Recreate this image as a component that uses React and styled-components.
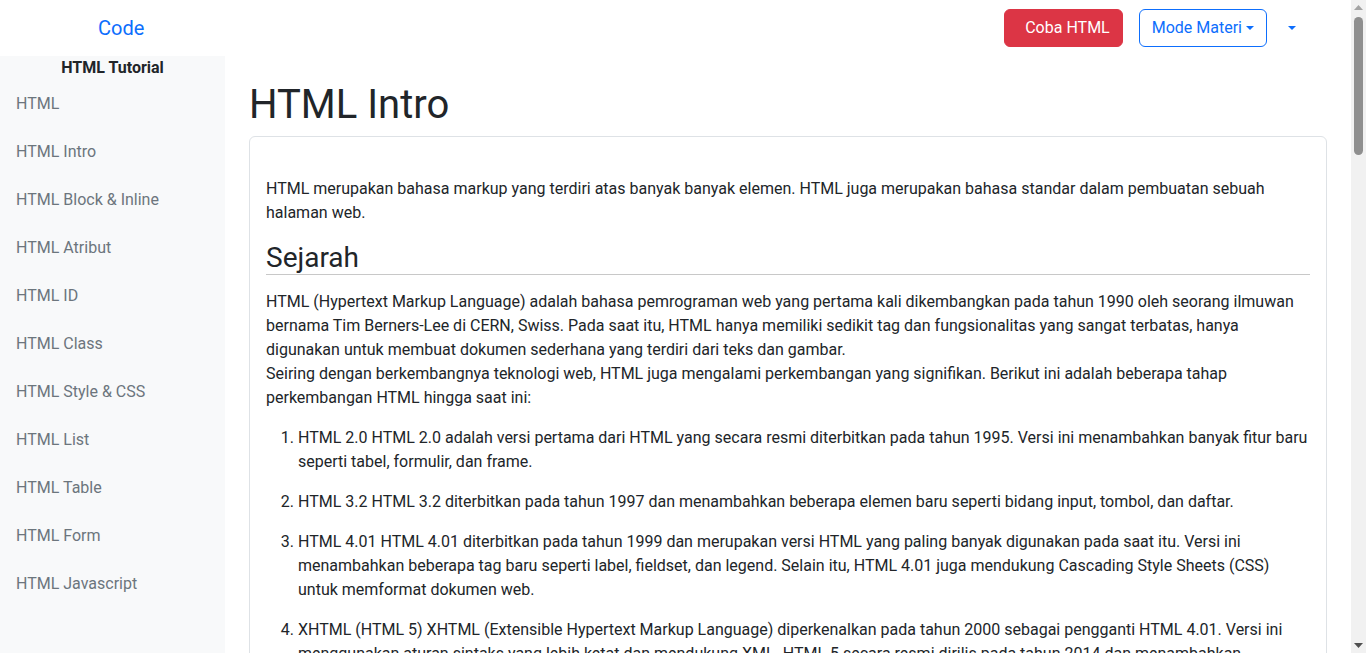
import React from "react";
import styled, { createGlobalStyle } from "styled-components";

const GlobalStyle = createGlobalStyle`
  *, *::before, *::after { box-sizing: border-box; }
  body {
    margin: 0;
    font-family: Roboto, "Liberation Sans", "Noto Sans", sans-serif;
    font-size: 16px;
    line-height: 1.5;
    color: #212529;
    background: #fff;
  }
`;

const Page = styled.div`
  display: flex;
  flex-direction: column;
  min-height: 100vh;
  padding-right: 15px;
`;

const FauxScrollbar = styled.div`
  position: fixed;
  top: 0;
  right: 0;
  width: 15px;
  height: 100vh;
  background: #f1f1f1;
  display: flex;
  flex-direction: column;
  align-items: center;
  justify-content: space-between;
  z-index: 10;
`;

const ScrollArrow = styled.div`
  width: 15px;
  height: 15px;
  display: flex;
  align-items: center;
  justify-content: center;
`;

const ScrollThumb = styled.div`
  position: absolute;
  top: 17px;
  left: 3px;
  width: 9px;
  height: 138px;
  border-radius: 5px;
  background: #8f8f8f;
`;

const Navbar = styled.header`
  height: 56px;
  display: flex;
  align-items: center;
  justify-content: space-between;
  background: #fff;
`;

const Brand = styled.a`
  padding-left: 98px;
  font-size: 20px;
  line-height: 30px;
  color: #0d6efd;
  text-decoration: none;
`;

const NavActions = styled.div`
  display: flex;
  align-items: center;
  padding-right: 42px;
`;

const Button = styled.button`
  font-family: inherit;
  font-size: 16px;
  line-height: 24px;
  height: 38px;
  border-radius: 6px;
  cursor: pointer;
  display: inline-flex;
  align-items: center;
  border: 1px solid transparent;
  background: transparent;
  color: #0d6efd;
  padding: 6px 12px;
`;

const DangerButton = styled(Button)`
  background: #dc3545;
  border-color: #dc3545;
  color: #fff;
  padding: 6px 12px 6px 20px;
  margin-right: 16px;
`;

const OutlineButton = styled(Button)`
  border-color: #0d6efd;
  color: #0d6efd;
`;

const GhostToggle = styled(Button)`
  margin-left: 4px;
`;

const Caret = styled.span`
  display: inline-block;
  margin-left: 4px;
  width: 0;
  height: 0;
  border-top: 4.8px solid currentColor;
  border-left: 4.8px solid transparent;
  border-right: 4.8px solid transparent;
  vertical-align: middle;
`;

const Layout = styled.div`
  display: flex;
  flex: 1;
`;

const Sidebar = styled.aside`
  width: 225px;
  flex-shrink: 0;
  background: #f8f9fa;
`;

const SideTitle = styled.div`
  text-align: center;
  font-weight: 700;
  font-size: 16px;
  line-height: 24px;
`;

const SideNav = styled.nav`
  display: flex;
  flex-direction: column;
`;

const SideLink = styled.a`
  display: block;
  padding: 12px 16px;
  line-height: 24px;
  color: #6c757d;
  text-decoration: none;
`;

const Main = styled.main`
  flex: 1;
  min-width: 0;
  padding: 0 24px 48px;
`;

const PageTitle = styled.h1`
  margin: 25px 0 7px;
  font-size: 40px;
  font-weight: 400;
  line-height: 48px;
`;

const Card = styled.section`
  border: 1px solid #dee2e6;
  border-radius: 6px;
  background: #fff;
`;

const CardBody = styled.div`
  padding: 40px 16px 16px;
`;

const Para = styled.p`
  margin: 0 0 16px;
`;

const SectionTitle = styled.h3`
  margin: 0 0 15px;
  font-size: 28px;
  font-weight: 400;
  line-height: 33px;
  border-bottom: 1px solid #c8c8c8;
`;

const OrderedList = styled.ol`
  margin: 0 0 16px;
  padding-left: 32px;
`;

const ListItem = styled.li`
  margin-bottom: 16px;
`;

const CodeBlock = styled.pre`
  margin: 0 0 16px;
  padding: 16px;
  background: #f8f9fa;
  border: 1px solid #dee2e6;
  border-radius: 6px;
  font-family: "Liberation Mono", "DejaVu Sans Mono", monospace;
  font-size: 14px;
  line-height: 1.5;
  color: #d63384;
  white-space: pre;
`;

const sideLinks = [
  "HTML",
  "HTML Intro",
  "HTML Block & Inline",
  "HTML Atribut",
  "HTML ID",
  "HTML Class",
  "HTML Style & CSS",
  "HTML List",
  "HTML Table",
  "HTML Form",
  "HTML Javascript",
];

const history = [
  "HTML 2.0 HTML 2.0 adalah versi pertama dari HTML yang secara resmi diterbitkan pada tahun 1995. Versi ini menambahkan banyak fitur baru seperti tabel, formulir, dan frame.",
  "HTML 3.2 HTML 3.2 diterbitkan pada tahun 1997 dan menambahkan beberapa elemen baru seperti bidang input, tombol, dan daftar.",
  "HTML 4.01 HTML 4.01 diterbitkan pada tahun 1999 dan merupakan versi HTML yang paling banyak digunakan pada saat itu. Versi ini menambahkan beberapa tag baru seperti label, fieldset, dan legend. Selain itu, HTML 4.01 juga mendukung Cascading Style Sheets (CSS) untuk memformat dokumen web.",
  "XHTML (HTML 5) XHTML (Extensible Hypertext Markup Language) diperkenalkan pada tahun 2000 sebagai pengganti HTML 4.01. Versi ini menggunakan aturan sintaks yang lebih ketat dan mendukung XML. HTML 5 secara resmi dirilis pada tahun 2014 dan menambahkan dukungan multimedia seperti audio dan video, canvas, serta API untuk membangun aplikasi web modern.",
  "HTML 5.1 dan 5.2 Versi ini diterbitkan pada tahun 2016 dan 2017 dengan beberapa perbaikan dan penambahan elemen baru seperti picture dan dialog.",
];

const sampleCode = `<!DOCTYPE html>
<html>
  <head>
    <title>Judul Halaman</title>
  </head>
  <body>
    <h1>Ini adalah Heading</h1>
    <p>Ini adalah paragraf.</p>
  </body>
</html>`;

export default function App() {
  return (
    <>
      <GlobalStyle />
      <FauxScrollbar aria-hidden="true">
        <ScrollArrow>
          <svg width="9" height="5" viewBox="0 0 9 5">
            <path d="M0 5 L4.5 0 L9 5 Z" fill="#a3a3a3" />
          </svg>
        </ScrollArrow>
        <ScrollThumb />
        <ScrollArrow>
          <svg width="9" height="5" viewBox="0 0 9 5">
            <path d="M0 0 L4.5 5 L9 0 Z" fill="#505050" />
          </svg>
        </ScrollArrow>
      </FauxScrollbar>
      <Page>
        <Navbar>
          <Brand href="#">Code</Brand>
          <NavActions>
            <DangerButton>Coba HTML</DangerButton>
            <OutlineButton>
              Mode Materi
              <Caret />
            </OutlineButton>
            <GhostToggle aria-label="menu">
              <Caret />
            </GhostToggle>
          </NavActions>
        </Navbar>
        <Layout>
          <Sidebar>
            <SideTitle>HTML Tutorial</SideTitle>
            <SideNav>
              {sideLinks.map((l) => (
                <SideLink key={l} href="#">
                  {l}
                </SideLink>
              ))}
            </SideNav>
          </Sidebar>
          <Main>
            <PageTitle>HTML Intro</PageTitle>
            <Card>
              <CardBody>
                <Para>
                  HTML merupakan bahasa markup yang terdiri atas banyak banyak elemen. HTML juga
                  merupakan bahasa standar dalam pembuatan sebuah halaman web.
                </Para>
                <SectionTitle>Sejarah</SectionTitle>
                <Para>
                  HTML (Hypertext Markup Language) adalah bahasa pemrograman web yang pertama kali
                  dikembangkan pada tahun 1990 oleh seorang ilmuwan bernama Tim Berners-Lee di
                  CERN, Swiss. Pada saat itu, HTML hanya memiliki sedikit tag dan fungsionalitas
                  yang sangat terbatas, hanya digunakan untuk membuat dokumen sederhana yang
                  terdiri dari teks dan gambar.
                  <br />
                  Seiring dengan berkembangnya teknologi web, HTML juga mengalami perkembangan yang
                  signifikan. Berikut ini adalah beberapa tahap perkembangan HTML hingga saat ini:
                </Para>
                <OrderedList>
                  {history.map((h) => (
                    <ListItem key={h}>{h}</ListItem>
                  ))}
                </OrderedList>
                <Para>
                  Saat ini, HTML terus berkembang dan diperbarui oleh W3C dan WHATWG sebagai
                  standar hidup (living standard) sehingga selalu mengikuti kebutuhan pengembangan
                  web modern.
                </Para>
                <SectionTitle>Struktur Dasar HTML</SectionTitle>
                <Para>
                  Sebuah dokumen HTML memiliki struktur dasar yang terdiri dari deklarasi doctype,
                  elemen html, elemen head, dan elemen body. Berikut adalah contoh struktur dasar
                  sebuah dokumen HTML:
                </Para>
                <CodeBlock>{sampleCode}</CodeBlock>
                <OrderedList>
                  <ListItem>
                    &lt;!DOCTYPE html&gt; merupakan deklarasi yang memberi tahu browser bahwa
                    dokumen ini adalah dokumen HTML5.
                  </ListItem>
                  <ListItem>
                    &lt;html&gt; merupakan elemen akar (root) dari sebuah halaman HTML.
                  </ListItem>
                  <ListItem>
                    &lt;head&gt; berisi informasi meta tentang halaman, seperti judul, karakter
                    set, dan tautan ke file CSS.
                  </ListItem>
                  <ListItem>
                    &lt;title&gt; menentukan judul halaman yang ditampilkan pada tab browser.
                  </ListItem>
                  <ListItem>
                    &lt;body&gt; berisi seluruh konten yang terlihat pada halaman, seperti teks,
                    gambar, tautan, tabel, dan daftar.
                  </ListItem>
                </OrderedList>
                <SectionTitle>Elemen HTML</SectionTitle>
                <Para>
                  Elemen HTML didefinisikan oleh tag pembuka, konten, dan tag penutup. Contohnya
                  elemen paragraf ditulis dengan &lt;p&gt;Ini paragraf&lt;/p&gt;. Beberapa elemen
                  tidak memiliki konten dan tag penutup, elemen seperti ini disebut elemen kosong
                  (empty element), contohnya &lt;br&gt; dan &lt;img&gt;.
                </Para>
                <Para>
                  Elemen HTML juga dapat bersarang (nested), artinya sebuah elemen dapat berisi
                  elemen lainnya. Semua dokumen HTML pada dasarnya terdiri dari elemen-elemen yang
                  saling bersarang.
                </Para>
                <SectionTitle>Kelebihan HTML</SectionTitle>
                <OrderedList>
                  <ListItem>Mudah dipelajari dan digunakan oleh pemula.</ListItem>
                  <ListItem>Didukung oleh semua browser modern.</ListItem>
                  <ListItem>Gratis dan tidak memerlukan perangkat lunak khusus.</ListItem>
                  <ListItem>
                    Dapat dikombinasikan dengan CSS dan JavaScript untuk membuat halaman yang
                    menarik dan interaktif.
                  </ListItem>
                </OrderedList>
                <SectionTitle>Kekurangan HTML</SectionTitle>
                <OrderedList>
                  <ListItem>Hanya dapat membuat halaman statis tanpa bantuan bahasa lain.</ListItem>
                  <ListItem>Struktur kode dapat menjadi panjang untuk halaman yang kompleks.</ListItem>
                  <ListItem>Keamanan terbatas karena kode dapat dilihat oleh siapa saja.</ListItem>
                </OrderedList>
                <SectionTitle>Kesimpulan</SectionTitle>
                <Para>
                  HTML adalah fondasi dari setiap halaman web. Dengan memahami dasar-dasar HTML,
                  kamu dapat mulai membangun halaman web sendiri dan melanjutkan belajar CSS serta
                  JavaScript untuk membuat halaman yang lebih menarik dan interaktif.
                </Para>
              </CardBody>
            </Card>
          </Main>
        </Layout>
      </Page>
    </>
  );
}
